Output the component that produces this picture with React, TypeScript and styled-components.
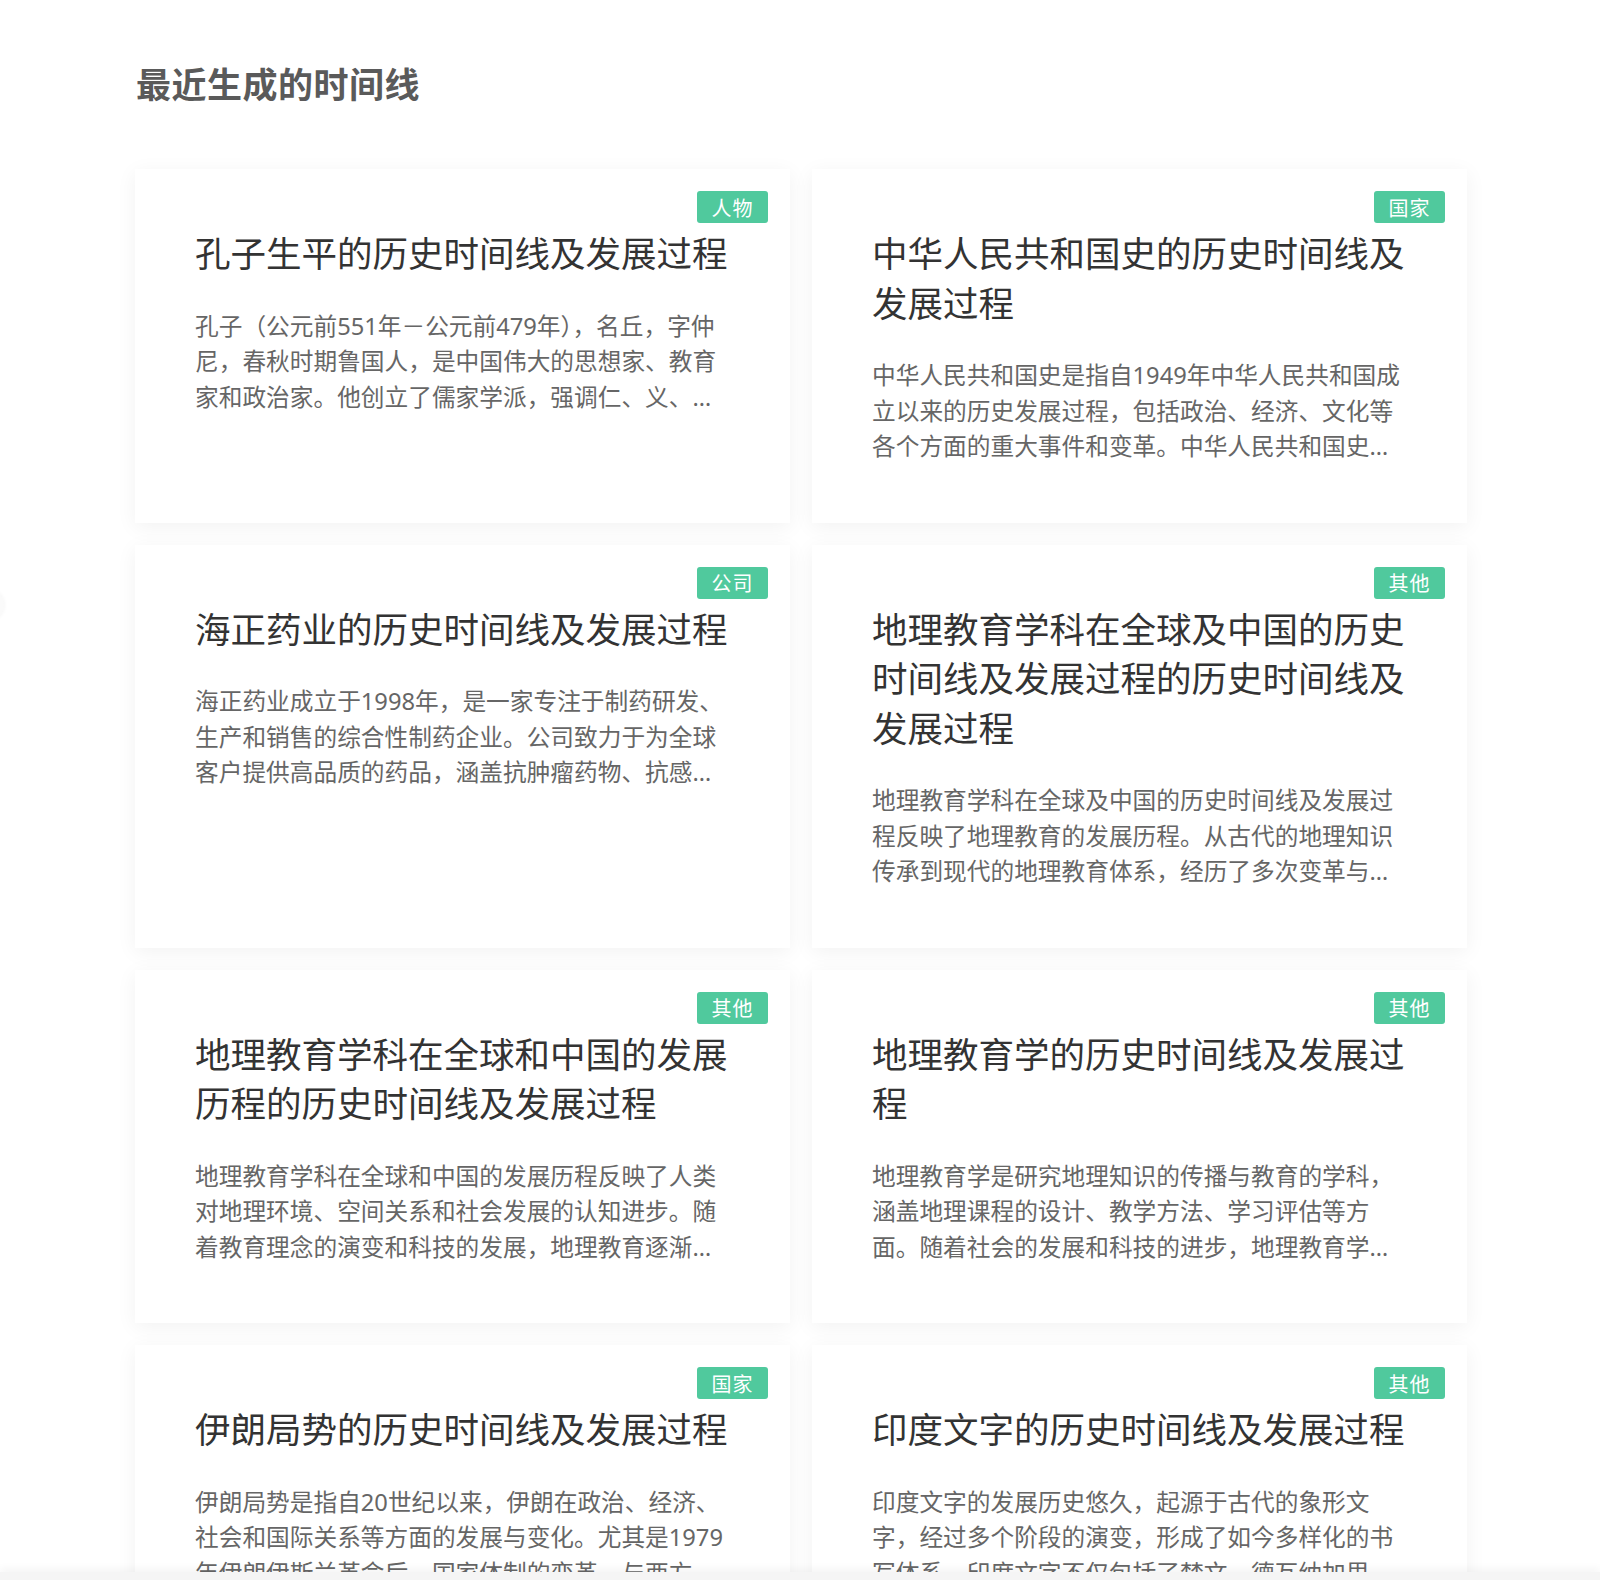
import React from 'react'
import styled, { createGlobalStyle } from 'styled-components'

const GlobalStyle = createGlobalStyle`
  html, body {
    margin: 0;
    padding: 0;
    background: #fff;
  }
  body {
    font-family: "Noto Sans", "Noto Sans CJK SC", "Liberation Sans", sans-serif;
    -webkit-font-smoothing: antialiased;
  }
`

type Item = { tag: string; title: string; desc: string }

const items: Item[] = [
  {
    tag: '人物',
    title: '孔子生平的历史时间线及发展过程',
    desc: '孔子（公元前551年－公元前479年），名丘，字仲尼，春秋时期鲁国人，是中国伟大的思想家、教育家和政治家。他创立了儒家学派，强调仁、义、礼、智、信等道德观念，对后世影响深远。',
  },
  {
    tag: '国家',
    title: '中华人民共和国史的历史时间线及发展过程',
    desc: '中华人民共和国史是指自1949年中华人民共和国成立以来的历史发展过程，包括政治、经济、文化等各个方面的重大事件和变革。中华人民共和国史记录了国家的成长与发展。',
  },
  {
    tag: '公司',
    title: '海正药业的历史时间线及发展过程',
    desc: '海正药业成立于1998年，是一家专注于制药研发、生产和销售的综合性制药企业。公司致力于为全球客户提供高品质的药品，涵盖抗肿瘤药物、抗感染药物等多个领域。',
  },
  {
    tag: '其他',
    title: '地理教育学科在全球及中国的历史时间线及发展过程的历史时间线及发展过程',
    desc: '地理教育学科在全球及中国的历史时间线及发展过程反映了地理教育的发展历程。从古代的地理知识传承到现代的地理教育体系，经历了多次变革与发展。',
  },
  {
    tag: '其他',
    title: '地理教育学科在全球和中国的发展历程的历史时间线及发展过程',
    desc: '地理教育学科在全球和中国的发展历程反映了人类对地理环境、空间关系和社会发展的认知进步。随着教育理念的演变和科技的发展，地理教育逐渐形成了完整的学科体系。',
  },
  {
    tag: '其他',
    title: '地理教育学的历史时间线及发展过程',
    desc: '地理教育学是研究地理知识的传播与教育的学科，涵盖地理课程的设计、教学方法、学习评估等方面。随着社会的发展和科技的进步，地理教育学不断丰富和完善。',
  },
  {
    tag: '国家',
    title: '伊朗局势的历史时间线及发展过程',
    desc: '伊朗局势是指自20世纪以来，伊朗在政治、经济、社会和国际关系等方面的发展与变化。尤其是1979年伊朗伊斯兰革命后，国家体制的变革、与西方国家的关系不断变化。',
  },
  {
    tag: '其他',
    title: '印度文字的历史时间线及发展过程',
    desc: '印度文字的发展历史悠久，起源于古代的象形文字，经过多个阶段的演变，形成了如今多样化的书写体系。印度文字不仅包括了梵文、德瓦纳加里文，还有多种地方文字。',
  },
]

const App = () => {
  return (
    <>
      <GlobalStyle />
      <Page>
        <Heading>最近生成的时间线</Heading>
        <Grid>
          {items.map((item, i) => (
            <Card key={i}>
              <Tag>{item.tag}</Tag>
              <Title>{item.title}</Title>
              <Desc>{item.desc}</Desc>
            </Card>
          ))}
        </Grid>
      </Page>
      <SideHandle />
      <BottomBar />
    </>
  )
}

export default App

const Page = styled.div`
  width: 1332px;
  margin: 0 auto;
  padding: 61px 0 80px;
  transform: translateX(1px);
`

const Heading = styled.h2`
  margin: 0 0 60px 1px;
  font-size: 35px;
  line-height: 48px;
  font-weight: 700;
  color: #5a5a5a;
  letter-spacing: 0.5px;
`

const Grid = styled.div`
  display: grid;
  grid-template-columns: 1fr 1fr;
  column-gap: 22px;
  row-gap: 22px;
`

const Card = styled.div`
  position: relative;
  background: #fff;
  padding: 60px 60px 58px;
  box-shadow: 0 4px 20px rgba(0, 0, 0, 0.055);
  box-sizing: border-box;
`

const Tag = styled.span`
  position: absolute;
  top: 22px;
  right: 22px;
  width: 71px;
  height: 32px;
  display: flex;
  align-items: center;
  justify-content: center;
  background: #50c99d;
  color: #fff;
  border-radius: 3px;
  font-size: 20px;
  letter-spacing: 1px;
`

const Title = styled.div`
  font-size: 35.5px;
  line-height: 49.5px;
  color: #333;
  font-weight: 400;
`

const Desc = styled.div`
  margin-top: 30px;
  font-size: 23.7px;
  line-height: 35.5px;
  color: #666;
  display: -webkit-box;
  -webkit-line-clamp: 3;
  -webkit-box-orient: vertical;
  overflow: hidden;
`

const BottomBar = styled.div`
  position: fixed;
  left: 0;
  right: 0;
  bottom: 0;
  height: 8px;
  background: #f5f5f5;
  box-shadow: 0 -3px 8px rgba(0, 0, 0, 0.05);
`

const SideHandle = styled.div`
  position: fixed;
  left: -18px;
  top: 592px;
  width: 22px;
  height: 26px;
  border-radius: 50%;
  background: #fafafa;
  box-shadow: 0 0 4px rgba(0, 0, 0, 0.06);
`
